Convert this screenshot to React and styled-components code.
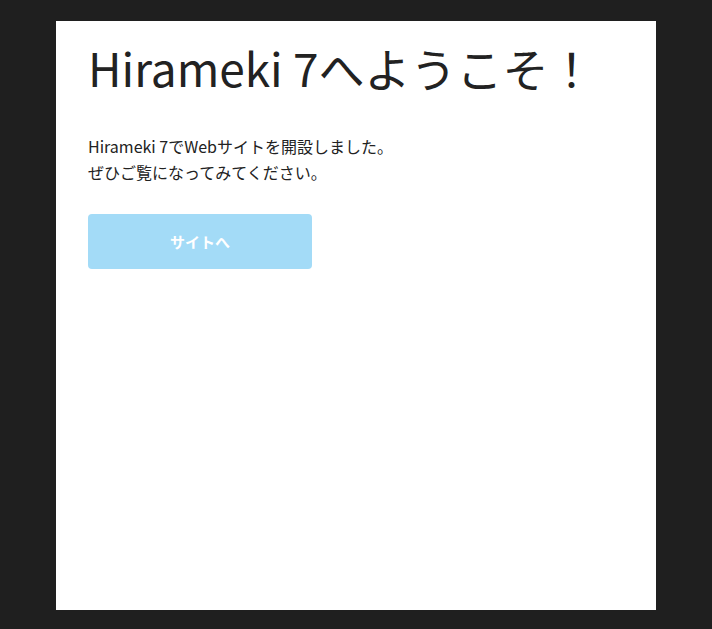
import React from 'react';
import styled, { createGlobalStyle } from 'styled-components';

const GlobalStyle = createGlobalStyle`
  html, body {
    margin: 0;
    padding: 0;
    background: #1f1f1f;
  }
  body {
    font-family: "Noto Sans CJK JP", "Noto Sans", sans-serif;
    color: #222;
  }
`;

const Page = styled.div`
  display: flex;
  justify-content: center;
  padding: 21px 0 19px;
  min-height: 629px;
  box-sizing: border-box;
`;

const Card = styled.main`
  width: 600px;
  min-height: 589px;
  box-sizing: border-box;
  background: #fff;
  padding: 12px 32px 20px;
`;

const Title = styled.h1`
  margin: 0;
  font-size: 46px;
  font-weight: 400;
  line-height: 1.5;
  color: #222;
  white-space: nowrap;
`;

const Lead = styled.p`
  margin: 32px 0 0;
  font-size: 16px;
  line-height: 1.6;
  color: #222;
`;

const SiteButton = styled.a`
  display: flex;
  align-items: center;
  justify-content: center;
  width: 224px;
  height: 55px;
  margin-top: 29px;
  background: #a3dbf7;
  border-radius: 4px;
  color: #fff;
  font-size: 15px;
  font-weight: 700;
  text-decoration: none;
`;

const App = () => {
  return (
    <>
      <GlobalStyle />
      <Page>
        <Card>
          <Title>Hirameki 7へようこそ！</Title>
          <Lead>
            Hirameki 7でWebサイトを開設しました。
            <br />
            ぜひご覧になってみてください。
          </Lead>
          <SiteButton href="#">サイトへ</SiteButton>
        </Card>
      </Page>
    </>
  );
};

export default App;
